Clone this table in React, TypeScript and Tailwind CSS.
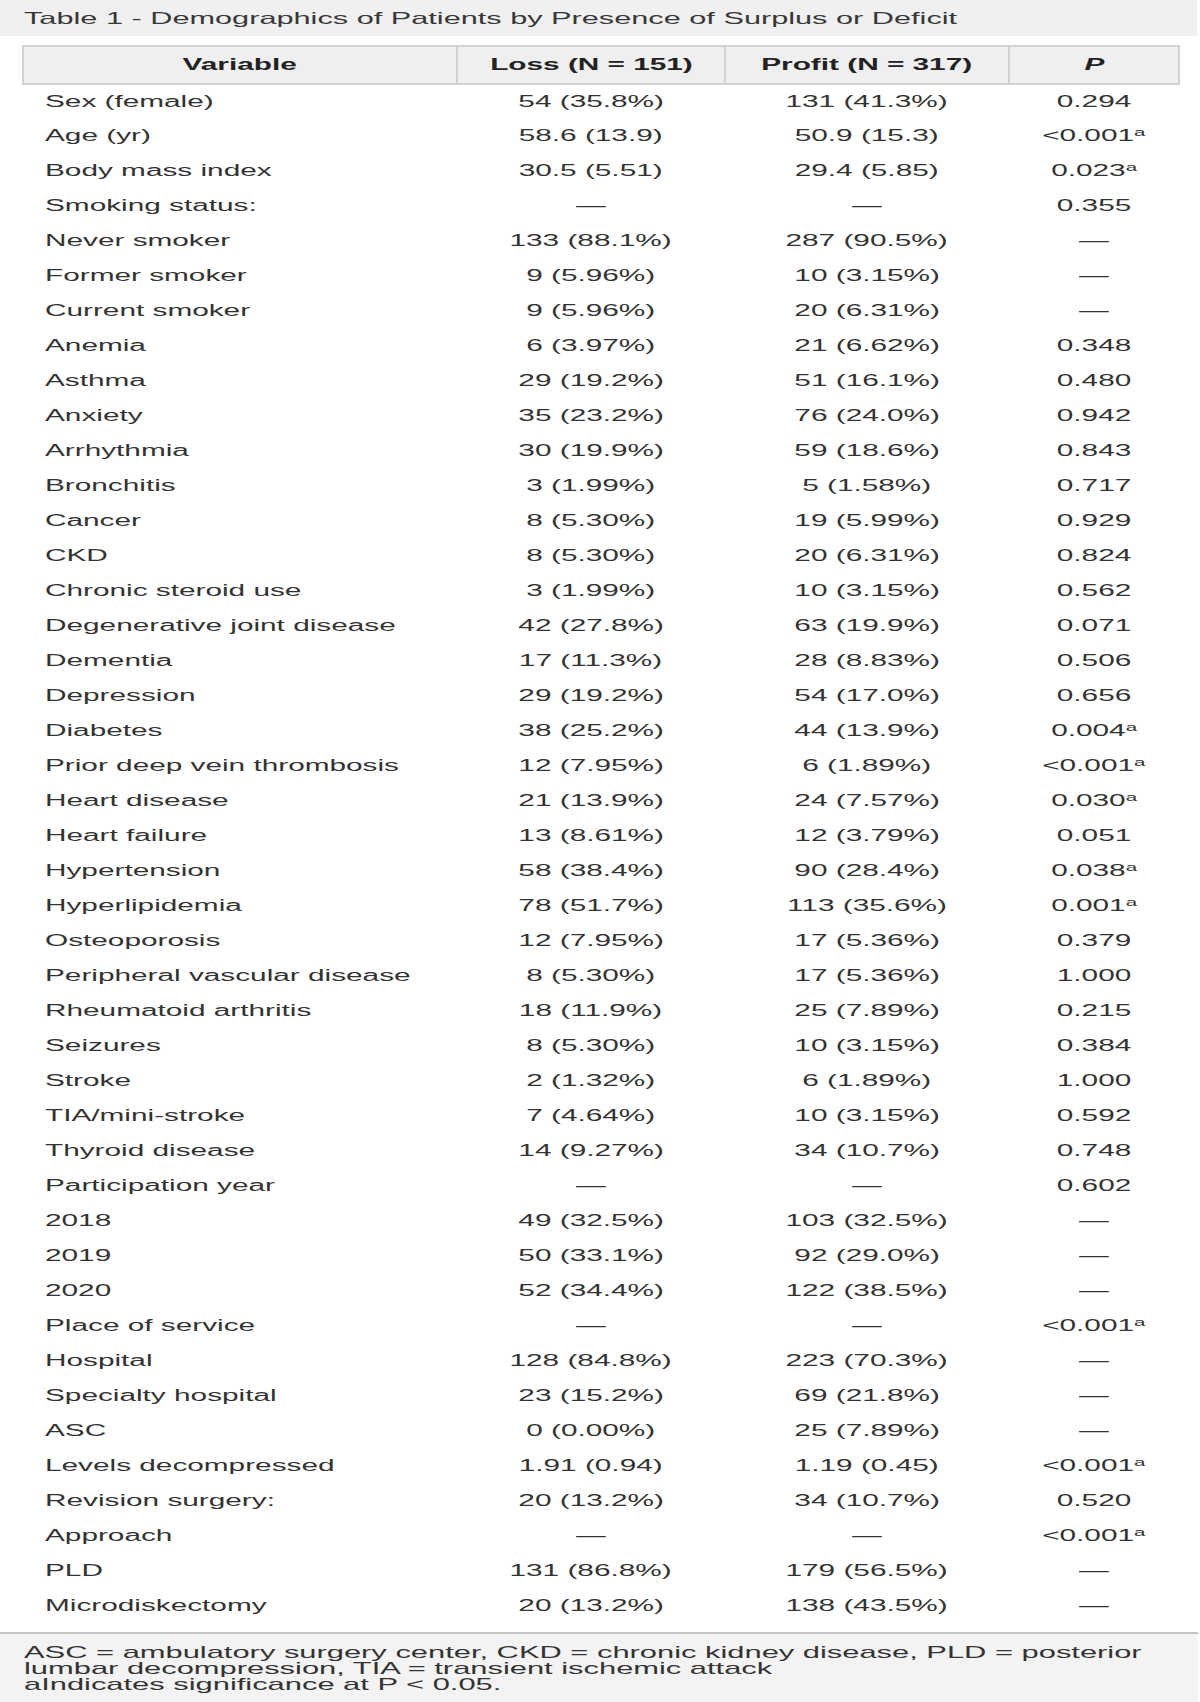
import React from "react";

type Row = [string, string, string, string];

const rows: Row[] = [
  ["Sex (female)", "54 (35.8%)", "131 (41.3%)", "0.294"],
  ["Age (yr)", "58.6 (13.9)", "50.9 (15.3)", "<0.001a"],
  ["Body mass index", "30.5 (5.51)", "29.4 (5.85)", "0.023a"],
  ["Smoking status:", "—", "—", "0.355"],
  ["Never smoker", "133 (88.1%)", "287 (90.5%)", "—"],
  ["Former smoker", "9 (5.96%)", "10 (3.15%)", "—"],
  ["Current smoker", "9 (5.96%)", "20 (6.31%)", "—"],
  ["Anemia", "6 (3.97%)", "21 (6.62%)", "0.348"],
  ["Asthma", "29 (19.2%)", "51 (16.1%)", "0.480"],
  ["Anxiety", "35 (23.2%)", "76 (24.0%)", "0.942"],
  ["Arrhythmia", "30 (19.9%)", "59 (18.6%)", "0.843"],
  ["Bronchitis", "3 (1.99%)", "5 (1.58%)", "0.717"],
  ["Cancer", "8 (5.30%)", "19 (5.99%)", "0.929"],
  ["CKD", "8 (5.30%)", "20 (6.31%)", "0.824"],
  ["Chronic steroid use", "3 (1.99%)", "10 (3.15%)", "0.562"],
  ["Degenerative joint disease", "42 (27.8%)", "63 (19.9%)", "0.071"],
  ["Dementia", "17 (11.3%)", "28 (8.83%)", "0.506"],
  ["Depression", "29 (19.2%)", "54 (17.0%)", "0.656"],
  ["Diabetes", "38 (25.2%)", "44 (13.9%)", "0.004a"],
  ["Prior deep vein thrombosis", "12 (7.95%)", "6 (1.89%)", "<0.001a"],
  ["Heart disease", "21 (13.9%)", "24 (7.57%)", "0.030a"],
  ["Heart failure", "13 (8.61%)", "12 (3.79%)", "0.051"],
  ["Hypertension", "58 (38.4%)", "90 (28.4%)", "0.038a"],
  ["Hyperlipidemia", "78 (51.7%)", "113 (35.6%)", "0.001a"],
  ["Osteoporosis", "12 (7.95%)", "17 (5.36%)", "0.379"],
  ["Peripheral vascular disease", "8 (5.30%)", "17 (5.36%)", "1.000"],
  ["Rheumatoid arthritis", "18 (11.9%)", "25 (7.89%)", "0.215"],
  ["Seizures", "8 (5.30%)", "10 (3.15%)", "0.384"],
  ["Stroke", "2 (1.32%)", "6 (1.89%)", "1.000"],
  ["TIA/mini-stroke", "7 (4.64%)", "10 (3.15%)", "0.592"],
  ["Thyroid disease", "14 (9.27%)", "34 (10.7%)", "0.748"],
  ["Participation year", "—", "—", "0.602"],
  ["2018", "49 (32.5%)", "103 (32.5%)", "—"],
  ["2019", "50 (33.1%)", "92 (29.0%)", "—"],
  ["2020", "52 (34.4%)", "122 (38.5%)", "—"],
  ["Place of service", "—", "—", "<0.001a"],
  ["Hospital", "128 (84.8%)", "223 (70.3%)", "—"],
  ["Specialty hospital", "23 (15.2%)", "69 (21.8%)", "—"],
  ["ASC", "0 (0.00%)", "25 (7.89%)", "—"],
  ["Levels decompressed", "1.91 (0.94)", "1.19 (0.45)", "<0.001a"],
  ["Revision surgery:", "20 (13.2%)", "34 (10.7%)", "0.520"],
  ["Approach", "—", "—", "<0.001a"],
  ["PLD", "131 (86.8%)", "179 (56.5%)", "—"],
  ["Microdiskectomy", "20 (13.2%)", "138 (43.5%)", "—"],
];

function Wide({ children, left }: { children: React.ReactNode; left?: boolean }) {
  return (
    <span
      className={
        left
          ? "inline-block origin-left scale-x-[1.86] whitespace-nowrap"
          : "inline-block origin-center scale-x-[1.86] whitespace-nowrap"
      }
    >
      {children}
    </span>
  );
}

function Val({ v }: { v: string }) {
  if (v.endsWith("a") && /\d/.test(v)) {
    return (
      <Wide>
        {v.slice(0, -1)}
        <sup className="text-[11px]">a</sup>
      </Wide>
    );
  }
  return <Wide>{v}</Wide>;
}

export default function App() {
  return (
    <div
      className="w-[1200px] h-[1702px] bg-white text-[#333] flex flex-col"
      style={{ fontFamily: '"Liberation Sans", Arial, sans-serif' }}
    >
      <div className="w-[1197px] h-[36px] bg-[#f0f0f0] flex items-center pl-[24px] text-[16.5px] text-[#383838]">
        <Wide left>Table 1 - Demographics of Patients by Presence of Surplus or Deficit</Wide>
      </div>

      <div className="pl-[22px] pt-[9px]">
        <table className="table-fixed border-collapse w-[1156px] text-[16px]">
          <colgroup>
            <col className="w-[434px]" />
            <col className="w-[268px]" />
            <col className="w-[284px]" />
            <col className="w-[170px]" />
          </colgroup>
          <thead>
            <tr className="h-[38px] bg-[#efefef] text-[#222] font-bold">
              <th className="border-2 border-[#d2d2d2] text-center p-0">
                <Wide>Variable</Wide>
              </th>
              <th className="border-2 border-[#d2d2d2] text-center p-0">
                <Wide>Loss (N = 151)</Wide>
              </th>
              <th className="border-2 border-[#d2d2d2] text-center p-0">
                <Wide>Profit (N = 317)</Wide>
              </th>
              <th className="border-2 border-[#d2d2d2] text-center p-0">
                <Wide>
                  <i>P</i>
                </Wide>
              </th>
            </tr>
          </thead>
          <tbody>
            {rows.map((r, i) => (
              <tr key={i} className="h-[35px]">
                <td className="pl-[22px] text-left p-0 pb-[1px]">
                  <Wide left>{r[0]}</Wide>
                </td>
                <td className="text-center p-0 pb-[1px]">
                  <Val v={r[1]} />
                </td>
                <td className="text-center p-0 pb-[1px]">
                  <Val v={r[2]} />
                </td>
                <td className="text-center p-0 pb-[1px]">
                  <Val v={r[3]} />
                </td>
              </tr>
            ))}
          </tbody>
        </table>
      </div>

      <div className="mt-[8px] w-[1198px] flex-1 bg-[#f3f3f3] border-t-2 border-[#c4c4c4] pl-[24px] pt-[11px] text-[16.6px] leading-[16px] text-[#333]">
        <div>
          <Wide left>ASC = ambulatory surgery center, CKD = chronic kidney disease, PLD = posterior</Wide>
        </div>
        <div>
          <Wide left>lumbar decompression, TIA = transient ischemic attack</Wide>
        </div>
        <div>
          <Wide left>aIndicates significance at P &lt; 0.05.</Wide>
        </div>
      </div>
    </div>
  );
}
